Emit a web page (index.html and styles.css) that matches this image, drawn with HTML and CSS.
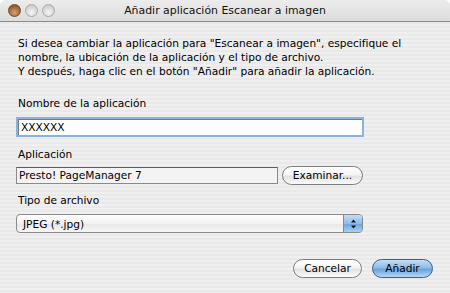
FILE: index.html
```html
<!DOCTYPE html>
<html lang="es">
<head>
<meta charset="utf-8">
<link rel="stylesheet" href="styles.css">
</head>
<body>
<div class="window">
  <div class="titlebar">
    <div class="lights">
      <span class="light close"></span>
      <span class="light"></span>
      <span class="light"></span>
    </div>
    <div class="title">Añadir aplicación Escanear a imagen</div>
  </div>
  <div class="content">
    <p class="intro">Si desea cambiar la aplicación para "Escanear a imagen", especifique el<br>nombre, la ubicación de la aplicación y el tipo de archivo.<br>Y después, haga clic en el botón "Añadir" para añadir la aplicación.</p>
    <div class="label first">Nombre de la aplicación</div>
    <div class="textfield">XXXXXX</div>
    <div class="label second">Aplicación</div>
    <div class="row">
      <div class="appfield">Presto! PageManager 7</div>
      <div class="btn">Examinar...</div>
    </div>
    <div class="label third">Tipo de archivo</div>
    <div class="popup">
      <span class="popup-text">JPEG (*.jpg)</span>
      <span class="popup-arrows">
        <svg width="7" height="10" viewBox="0 0 7 10"><path d="M3.5 0.5 L6 3.5 L1 3.5 Z M3.5 9.5 L6 6.5 L1 6.5 Z" fill="#111"/></svg>
      </span>
    </div>
    <div class="actions">
      <div class="btn cancel">Cancelar</div>
      <div class="btn default">Añadir</div>
    </div>
  </div>
</div>
</body>
</html>
```
FILE: styles.css
```css
html, body {
  margin: 0;
  padding: 0;
}
body {
  width: 450px;
  height: 293px;
  overflow: hidden;
  font-family: "DejaVu Sans", "Liberation Sans", sans-serif;
  font-size: 10.6px;
  color: #000;
}
.window {
  width: 450px;
  height: 293px;
  display: flex;
  flex-direction: column;
  background: repeating-linear-gradient(to bottom, #efefef 0, #efefef 2px, #e9e9e9 2px, #e9e9e9 4px);
  border-top-right-radius: 6px;
  border-top-left-radius: 6px;
  overflow: hidden;
}
.titlebar {
  height: 21px;
  flex: none;
  display: flex;
  align-items: center;
  position: relative;
  background: linear-gradient(to bottom, #ececec 0, #dcdcdc 100%);
  border-bottom: 1px solid #8c8c8c;
}
.lights {
  display: flex;
  gap: 4px;
  padding-left: 8px;
}
.light {
  width: 13px;
  height: 13px;
  border-radius: 50%;
  box-sizing: border-box;
  border: 1px solid #a8a8a8;
  background: radial-gradient(circle at 50% 70%, #f4f4f4 0, #d6d6d6 60%, #bcbcbc 100%);
}
.light.close {
  border-color: #6a4a2a;
  background: radial-gradient(circle at 50% 70%, #d8a070 0, #a86a3a 55%, #6c4220 100%);
}
.title {
  position: absolute;
  left: 0;
  right: 0;
  text-align: center;
  font-size: 10.9px;
  color: #111;
}
.content {
  display: flex;
  flex-direction: column;
  padding: 0 17px 0 16px;
}
.intro {
  margin: 14px 0 0 2px;
  line-height: 14px;
}
.label {
  margin: 0 0 0 2px;
  height: 15px;
  line-height: 15px;
}
.label.first {
  margin-top: 18px;
}
.label.second {
  margin-top: 10px;
}
.label.third {
  margin-top: 8px;
}
.textfield {
  margin-top: 6px;
  width: 348px;
  height: 20px;
  box-sizing: border-box;
  border: 2px solid #8bb1de;
  box-shadow: inset 1px 1px 0 #7a7a7a;
  background: #fff;
  padding-left: 3px;
  line-height: 16px;
}
.row {
  display: flex;
  align-items: center;
  gap: 4px;
  margin-top: 4px;
}
.appfield {
  width: 262px;
  height: 17px;
  box-sizing: border-box;
  border: 1px solid #8a8a8a;
  border-top-color: #5e5e5e;
  background: #f3f3f3;
  padding-left: 2px;
  line-height: 15px;
}
.btn {
  height: 19px;
  box-sizing: border-box;
  border: 1px solid #7d7d7d;
  border-radius: 10px;
  background: linear-gradient(to bottom, #ffffff 0, #f4f4f4 45%, #e2e2e2 55%, #fbfbfb 100%);
  line-height: 17px;
  text-align: center;
}
.row .btn {
  width: 81px;
}
.popup {
  margin-top: 6px;
  width: 347px;
  height: 19px;
  box-sizing: border-box;
  border: 1px solid #8a8a8a;
  border-radius: 4px;
  background: linear-gradient(to bottom, #fdfdfd 0, #f2f2f2 50%, #e8e8e8 51%, #f6f6f6 100%);
  display: flex;
  align-items: center;
  overflow: hidden;
}
.popup-text {
  flex: 1;
  padding-left: 6px;
}
.popup-arrows {
  width: 18px;
  height: 100%;
  display: flex;
  align-items: center;
  justify-content: center;
  background: linear-gradient(to bottom, #c3dcf6 0, #8fbcea 50%, #6aa3dc 51%, #a9d0f4 100%);
  border-left: 1px solid #6c8fb8;
}
.actions {
  display: flex;
  justify-content: flex-end;
  gap: 10px;
  margin-top: 26px;
}
.actions .btn.cancel {
  width: 69px;
}
.actions .btn.default {
  width: 61px;
  border-color: #3b5f8f;
  background: linear-gradient(to bottom, #c5def7 0, #8fbce9 45%, #6ba4dc 55%, #b3d7f6 100%);
}
```
